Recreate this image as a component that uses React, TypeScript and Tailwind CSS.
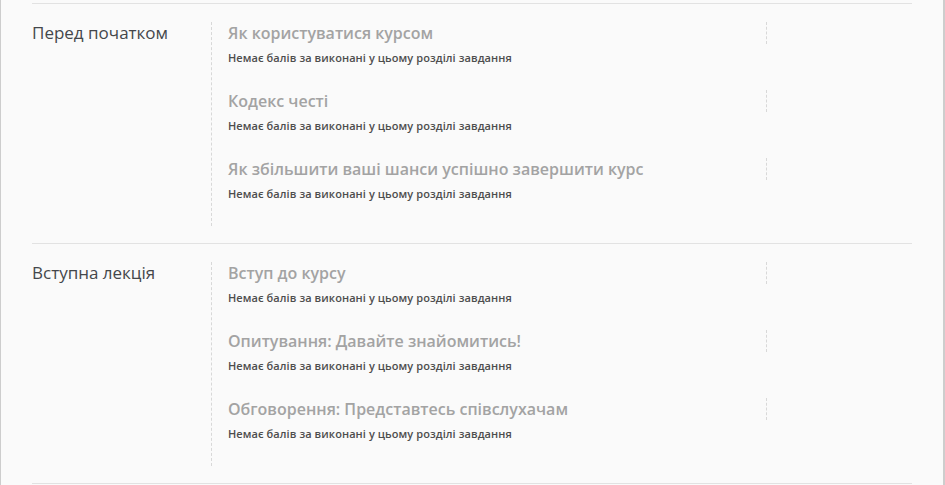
const sections = [
  {
    title: 'Перед початком',
    items: [
      'Як користуватися курсом',
      'Кодекс честі',
      'Як збільшити ваші шанси успішно завершити курс',
    ],
  },
  {
    title: 'Вступна лекція',
    items: [
      'Вступ до курсу',
      'Опитування: Давайте знайомитись!',
      'Обговорення: Представтесь співслухачам',
    ],
  },
];

const noScore = 'Немає балів за виконані у цьому розділі завдання';

export default function App() {
  return (
    <div
      className="min-h-[485px] bg-[#fafafa] border-l border-r-2 border-[#cdcdcd] px-[31px] pt-[3px]"
      style={{ fontFamily: '"Open Sans", "Noto Sans", sans-serif' }}
    >
      {sections.map((section) => (
        <div key={section.title} className="flex border-t border-[#e2e2e2] pt-[18px] pb-[17px]">
          {/* Section name */}
          <div className="w-[179px] shrink-0 text-[17px] leading-[22px] text-[#44474b]">
            {section.title}
          </div>

          {/* Items */}
          <div className="flex-1 border-l border-dashed border-[#d8d8d8]">
            {section.items.map((item) => (
              <div key={item} className="flex pb-6">
                <div className="flex-1 pl-4">
                  <p className="text-[16px] leading-[22px] font-semibold text-[#a3a3a3]">{item}</p>
                  <p className="mt-[6px] text-[11px] leading-[16px] font-semibold tracking-[0.08px] text-[#4d4d4d]">{noScore}</p>
                </div>
                <div className="w-[146px] h-[22px] shrink-0 border-l border-dashed border-[#d8d8d8]" />
              </div>
            ))}
          </div>
        </div>
      ))}
      <div className="border-t border-[#e2e2e2]" />
    </div>
  );
}
